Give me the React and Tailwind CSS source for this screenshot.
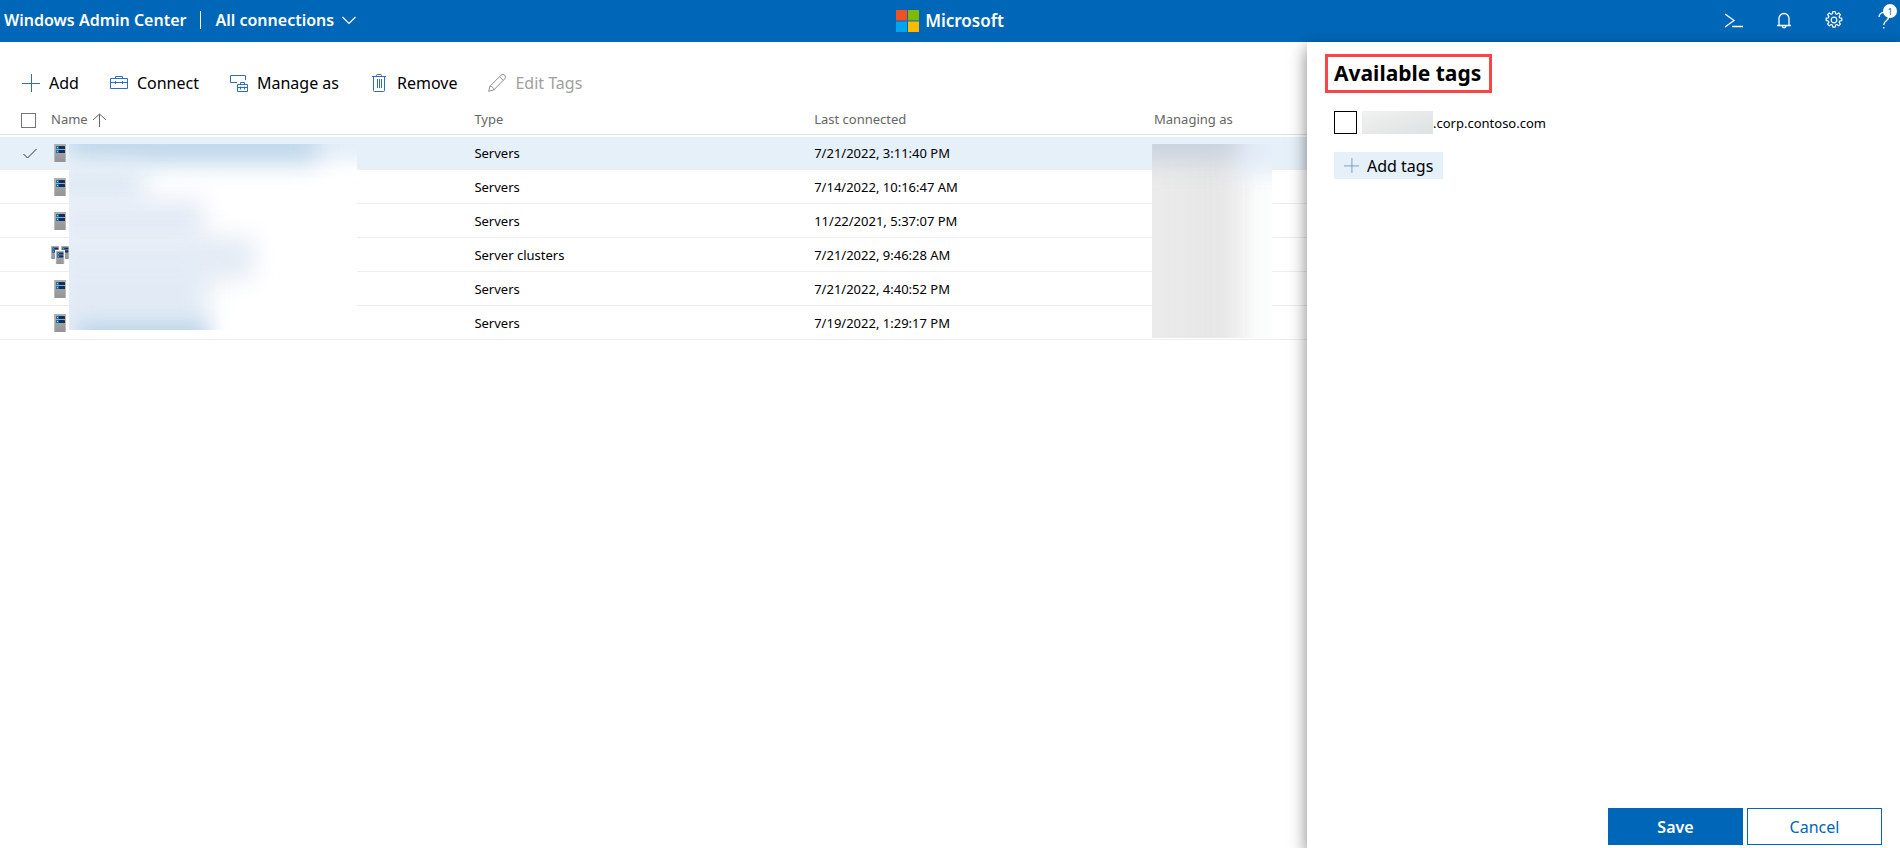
import { useState } from "react";

const rows = [
  { id: 1, kind: "server", type: "Servers", last: "7/21/2022, 3:11:40 PM" },
  { id: 2, kind: "server", type: "Servers", last: "7/14/2022, 10:16:47 AM" },
  { id: 3, kind: "server", type: "Servers", last: "11/22/2021, 5:37:07 PM" },
  { id: 4, kind: "cluster", type: "Server clusters", last: "7/21/2022, 9:46:28 AM" },
  { id: 5, kind: "server", type: "Servers", last: "7/21/2022, 4:40:52 PM" },
  { id: 6, kind: "server", type: "Servers", last: "7/19/2022, 1:29:17 PM" },
];

function Glyph({ className = "size-[18px]", size = 18, children }) {
  return (
    <svg
      aria-hidden="true"
      viewBox={`0 0 ${size} ${size}`}
      className={`shrink-0 ${className}`}
      fill="none"
      stroke="currentColor"
      strokeWidth="1"
    >
      {children}
    </svg>
  );
}

const PlusIcon = ({ className }) => (
  <Glyph className={className}>
    <path d="M9.5 0v18M0 9.5h18" />
  </Glyph>
);

const ToolboxIcon = () => (
  <Glyph>
    <path d="M.5 4.500h17v10H.5zM5.500 4.500v-2h7v2M.5 8.500h17M5.500 7v3M12.500 7v3" />
  </Glyph>
);

const ManageIcon = () => (
  <Glyph>
    <path d="M7 8.500H.5v-7h15V6" />
    <path d="M7.500 10.500h10v7h-10zM10.500 10.500v-2h4v2M7.500 13.500h10M10.500 12.500v3M14.500 12.500v3" />
  </Glyph>
);

const TrashIcon = () => (
  <Glyph>
    <path d="M2 2.500h14M6.500 2V1.500a1 1 0 0 1 1-1h3a1 1 0 0 1 1 1V2M3.500 3v13.500a1 1 0 0 0 1 1h9a1 1 0 0 0 1-1V3M7.500 5v9M9.500 5v9M11.500 5v9" />
  </Glyph>
);

const PencilIcon = () => (
  <Glyph>
    <path d="M.7 17.300l1.200-5L13 1.200a2.500 2.500 0 0 1 3.700 3.700L5.700 16zM1.900 12.300a3.400 3.400 0 0 1 3.800 3.700M11.500 2.700l3.800 3.800" />
  </Glyph>
);

function ServerShape({ x = 0, y = 0, w = 12, h = 18 }) {
  return (
    <svg x={x} y={y} width={w} height={h} viewBox="0 0 12 18" preserveAspectRatio="none">
      <rect width="12" height="18" fill="url(#chassis)" />
      <rect width="1" height="18" fill="#b9b9b9" />
      <rect x="11" width="1" height="18" fill="#b9b9b9" />
      <rect x="2" y="2" width="9" height="3" rx=".6" fill="#0b2f66" />
      <rect x="2" y="6" width="9" height="3" rx=".6" fill="#0b2f66" />
      <rect x="2" y="2" width="3" height="3" rx=".6" fill="#1f74ad" />
      <rect x="2" y="6" width="3" height="3" rx=".6" fill="#1f74ad" />
      <rect x="3" y="3" width="1" height="1" fill="#6fe8ff" />
      <rect x="3" y="7" width="1" height="1" fill="#6fe8ff" />
    </svg>
  );
}

function ConnectionIcon({ kind }) {
  return (
    <svg aria-hidden="true" viewBox="0 0 18 18" className="size-[18px]">
      <defs>
        <linearGradient id="chassis" x1="0" y1="0" x2="0" y2="1">
          <stop offset="0" stopColor="#adadad" />
          <stop offset="1" stopColor="#959595" />
        </linearGradient>
      </defs>
      {kind === "server" ? (
        <ServerShape x={3} />
      ) : (
        <>
          <ServerShape x={0} y={0} w={8} h={13} />
          <ServerShape x={10} y={0} w={8} h={13} />
          <rect x="4" y="4" width="10" height="14" fill="#f2f2f2" />
          <ServerShape x={5} y={5} w={8} h={13} />
        </>
      )}
    </svg>
  );
}

function ToolButton({ icon, label, disabled }) {
  return (
    <button
      type="button"
      disabled={disabled}
      className="flex items-center gap-[9px] text-black disabled:text-[#a0a0a0]"
    >
      <span className={disabled ? "text-[#8f8f8f]" : "text-[#2f6cbb]"}>{icon}</span>
      {label}
    </button>
  );
}

function HeaderIcon({ label, children }) {
  return (
    <button type="button" aria-label={label} className="flex h-8 w-8 items-center justify-center">
      {children}
    </button>
  );
}

function TopBar() {
  return (
    <header className="grid h-[42px] grid-cols-[1fr_auto_1fr] items-center bg-[#0067b8] text-white">
      <div className="flex items-center pb-0.5 pl-1 text-[16px] font-semibold">
        <a href="#home">Windows Admin Center</a>
        <span className="mr-3.5 ml-3.5 h-[18px] w-px bg-white" />
        <button type="button" className="flex items-center gap-2">
          All connections
          <Glyph className="h-3.5 w-3.5" size={14}>
            <path d="M.5 4l6.500 6.500L13.500 4" strokeWidth="1.200" />
          </Glyph>
        </button>
      </div>
      <div className="flex items-center gap-1.5">
        <svg aria-hidden="true" viewBox="0 0 23 22" className="h-[22px] w-[23px]">
          <rect width="11" height="10.500" fill="#f25022" />
          <rect x="12" width="11" height="10.500" fill="#7fba00" />
          <rect y="11.500" width="11" height="10.500" fill="#00a4ef" />
          <rect x="12" y="11.500" width="11" height="10.500" fill="#ffb900" />
        </svg>
        <span className="text-[17px] font-semibold">Microsoft</span>
      </div>
      <div className="flex justify-end gap-[18px] pb-0.5">
        <HeaderIcon label="PowerShell">
          <Glyph>
            <path d="M0 3l9 6.500L0 16M7 15.500h11" strokeWidth="1.300" />
          </Glyph>
        </HeaderIcon>
        <HeaderIcon label="Notifications">
          <Glyph>
            <path
              d="M2 14.500h14M4 14.500V7.500a5 5 0 0 1 10 0v7M7.300 15a1.800 1.800 0 0 0 3.600 0"
              strokeWidth="1.300"
            />
          </Glyph>
        </HeaderIcon>
        <HeaderIcon label="Settings">
          <Glyph>
            <circle cx="9" cy="9" r="2.800" strokeWidth="1.200" />
            <path
              strokeWidth="1.200"
              strokeLinejoin="round"
              d="M7.800.600h2.400l.400 2.200 1.200.500 1.900-1.300 1.700 1.700-1.300 1.900.500 1.200 2.200.400v2.400l-2.200.400-.500 1.200 1.300 1.900-1.700 1.700-1.900-1.300-1.200.500-.400 2.200H7.800l-.400-2.200-1.200-.500-1.900 1.300-1.700-1.700 1.300-1.900-.500-1.200-2.200-.400V7.200l2.200-.400.500-1.200L2.600 3.700l1.700-1.700 1.900 1.300 1.200-.500z"
            />
          </Glyph>
        </HeaderIcon>
        <div className="relative">
          <HeaderIcon label="Help, 1 new item">
            <Glyph>
              <path
                d="M4 6a4.800 4.800 0 0 1 9.600.300c0 3.200-4.800 3.600-4.800 7.200v.500M8.800 16v1.500"
                strokeWidth="1.300"
              />
            </Glyph>
          </HeaderIcon>
          <span className="absolute top-0 right-[3px] flex size-3.5 items-center justify-center rounded-full bg-white text-[9px] leading-none text-[#0067b8]">
            1
          </span>
        </div>
      </div>
    </header>
  );
}

function ConnectionTable() {
  const [selected, setSelected] = useState([1]);
  const toggle = (id) =>
    setSelected((s) => (s.includes(id) ? s.filter((v) => v !== id) : [...s, id]));

  return (
    <div className="relative">
      <table className="w-full table-fixed border-separate border-spacing-0 text-left text-[13px]">
        <thead className="text-[#666]">
          <tr className="h-[33px] [&>th]:border-b [&>th]:border-[#e0e0e0] [&>th]:p-0 [&>th]:pt-1 [&>th]:font-normal">
            <th className="w-[51px]">
              <input
                type="checkbox"
                aria-label="Select all connections"
                className="ml-[21px] block size-[15px] appearance-none border border-[#767676] bg-white"
              />
            </th>
            <th>
              <button type="button" className="flex items-center gap-1">
                Name
                <Glyph className="h-3.5 w-3.5" size={14}>
                  <path d="M7.500 1v13M1 7l6.500-6L14 7" />
                </Glyph>
              </button>
            </th>
            <th className="w-[26%]">Type</th>
            <th className="w-[26%]">Last connected</th>
            <th className="w-[153px]">Managing as</th>
          </tr>
        </thead>
        <tbody className="text-black">
          {rows.map((row) => {
            const isSelected = selected.includes(row.id);
            return (
              <tr
                key={row.id}
                className={`h-[34px] first:h-[35px] [&>td]:border-b [&>td]:border-[#ededed] [&>td]:px-0 first:[&>td]:border-t-2 first:[&>td]:border-t-white ${
                  isSelected ? "bg-[#e5f0f9]" : "bg-white"
                }`}
              >
                <td className="py-0">
                  <label className="flex h-[18px] items-center pl-[23px]">
                    <input
                      type="checkbox"
                      aria-label={`Select connection ${row.id}`}
                      checked={isSelected}
                      onChange={() => toggle(row.id)}
                      className="sr-only"
                    />
                    {isSelected && (
                      <Glyph className="h-3.5 w-3.5 text-[#333]" size={14}>
                        <path d="M.5 8l4 4L13.500 3" />
                      </Glyph>
                    )}
                  </label>
                </td>
                <td className="py-0">
                  <ConnectionIcon kind={row.kind} />
                </td>
                <td className="pt-0.5 pb-0">{row.type}</td>
                <td className="pt-0.5 pb-0">{row.last}</td>
                <td className="py-0" />
              </tr>
            );
          })}
        </tbody>
      </table>

      {/* Redaction over the connection names */}
      <div className="absolute top-[42px] left-[69px] h-[186px] w-[288px] overflow-hidden bg-white">
        <div className="absolute -top-10 -left-5 h-[56px] w-[360px] bg-[#e2eef8] blur-[10px]" />
        <div className="absolute -top-5 left-0 h-[38px] w-[248px] bg-[#c0d7ea] blur-[12px]" />
        <div className="absolute top-[20px] -left-5 h-[42px] w-[95px] bg-[#dfeaf4] blur-[12px]" />
        <div className="absolute top-[55px] -left-5 h-[45px] w-[155px] bg-[#e4ebf6] blur-[12px]" />
        <div className="absolute top-[93px] -left-5 h-[42px] w-[205px] bg-[#e3ebf5] blur-[12px]" />
        <div className="absolute top-[115px] -left-5 h-[80px] w-[160px] bg-[#e2ebf5] blur-[12px]" />
        <div className="absolute top-[180px] left-2 h-[30px] w-[130px] bg-[#b4d0e8] blur-[10px]" />
      </div>

      {/* Redaction over the account names */}
      <div className="absolute top-[42px] right-[35px] h-[194px] w-[120px] overflow-hidden bg-[#fcfdfd]">
        <div className="absolute -top-10 -left-10 h-[280px] w-[128px] bg-[#ebebeb] blur-[14px]" />
        <div className="absolute top-0 left-9 h-[240px] w-[40px] bg-[#e6e6e6] blur-[14px]" />
        <div className="absolute -top-10 left-[80px] h-[70px] w-[80px] bg-[#e4eef8] blur-[10px]" />
        <div className="absolute -top-10 -left-5 h-[58px] w-[108px] bg-[#c9d3de] blur-[12px]" />
      </div>
    </div>
  );
}

function TagsPanel() {
  return (
    <aside className="relative flex w-[593px] shrink-0 flex-col bg-white shadow-[0_6px_16px_rgba(0,0,0,0.5)]">
      <div className="flex flex-1 flex-col items-start pt-3 pl-[18px]">
        <h2 className="flex h-[39px] items-center border-3 border-[#fb4445] pr-2 pl-1.5 text-[21px] font-bold text-black">
          Available tags
        </h2>
        <label className="mt-[17px] ml-[9px] flex h-6 items-center text-[13px] text-black">
          <input
            type="checkbox"
            className="mr-[5px] size-[23px] appearance-none border border-black bg-white"
          />
          <span className="h-[23px] w-[71px] bg-linear-to-br from-[#f1f1f1] to-[#dee2e2]" />
          <span className="mt-1">.corp.contoso.com</span>
        </label>
        <button
          type="button"
          className="mt-[18px] ml-[9px] flex h-[27px] items-center gap-2 bg-[#e5f0f9] px-2.5 text-[16px] text-black"
        >
          <PlusIcon className="size-[15px] text-[#6f8fb8]" />
          Add tags
        </button>
      </div>
      <div className="flex justify-end gap-1 pr-[18px] pb-[3px] text-[16px]">
        <button type="button" className="h-[37px] w-[135px] bg-[#0067b8] font-semibold text-white">
          Save
        </button>
        <button
          type="button"
          className="h-[37px] w-[135px] border border-[#0067b8] bg-white text-[#0067b8]"
        >
          Cancel
        </button>
      </div>
    </aside>
  );
}

export default function App() {
  return (
    <div className="flex min-h-screen flex-col bg-white font-['Noto_Sans','Open_Sans',sans-serif]">
      <TopBar />
      <div className="flex flex-1">
        <main className="min-w-0 flex-1 pt-5">
          <div className="flex h-10 items-center gap-[31px] pt-0.5 pl-[22px] text-[16px]">
            <ToolButton icon={<PlusIcon />} label="Add" />
            <ToolButton icon={<ToolboxIcon />} label="Connect" />
            <ToolButton icon={<ManageIcon />} label="Manage as" />
            <ToolButton icon={<TrashIcon />} label="Remove" />
            <ToolButton icon={<PencilIcon />} label="Edit Tags" disabled />
          </div>
          <ConnectionTable />
        </main>
        <TagsPanel />
      </div>
    </div>
  );
}
